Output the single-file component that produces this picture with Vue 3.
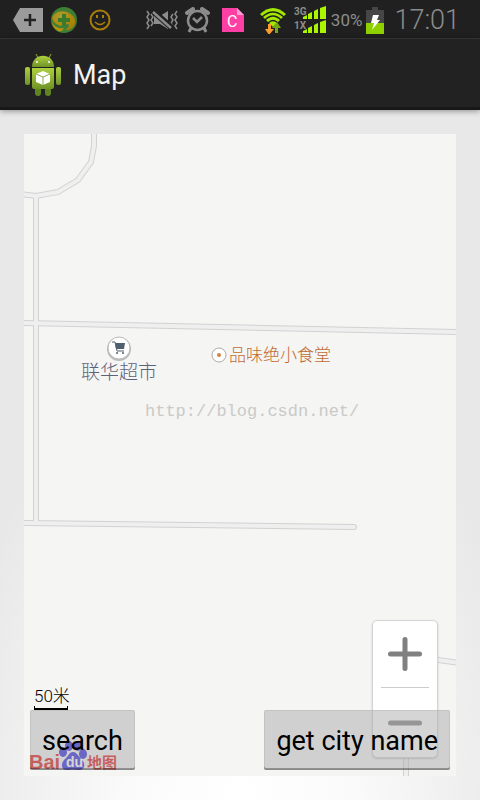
<template>
  <div class="screen">
    <header class="status-bar">
      <div class="notifications">
        <svg width="30" height="24" viewBox="0 0 30 24">
          <path d="M7 0H30V24H7L0 12Z" fill="#9b9b9b" />
          <path d="M17 6V18M11 12H23" stroke="#222" stroke-width="2.500" />
        </svg>
        <svg width="26" height="26" viewBox="0 0 26 26">
          <defs>
            <radialGradient id="shield" cx=".4" cy=".3" r=".8">
              <stop offset="0" stop-color="#a8a03a" />
              <stop offset=".5" stop-color="#b08a0c" />
              <stop offset="1" stop-color="#a07a08" />
            </radialGradient>
          </defs>
          <circle cx="13" cy="13" r="13" fill="#3f7f35" />
          <path d="M1 11C4 3 14 3 18 6C23 9 26 13 23 19C20 23 17 23 14 23C20 20 18 16 16 17C11 21 3 18 1 11Z" fill="url(#shield)" />
          <path d="M1 15C3 20 8 22 13 21C12 24 9 25 7 24C4 22 1 19 1 15Z" fill="#b98f10" />
          <path d="M13 7V19M7 13H19" stroke="#3a7a2a" stroke-width="4" />
        </svg>
        <svg class="smiley" width="22" height="22" viewBox="0 0 22 22" fill="none" stroke="#a97d0c" stroke-width="2">
          <circle cx="11" cy="11" r="9.500" />
          <path d="M6 13Q11 18 16 13" stroke-width="1.500" />
          <path d="M8 6V9M14 6V9" />
        </svg>
      </div>
      <div class="system">
        <svg width="36" height="24" viewBox="0 0 36 24" fill="none" stroke="#8c8c8c" stroke-width="2">
          <path d="M2 3L4 6L2 9L4 12L2 15L4 18L2 21M6 6L8 9L6 12L8 15L6 18M32 3L30 6L32 9L30 12L32 15L30 18L32 21M28 6L26 9L28 12L26 15L28 18" stroke-width="1.500" />
          <path d="M9 8H15L23 3V21L15 16H9Z" fill="#8c8c8c" stroke="none" />
          <path d="M9 4L27 20" stroke="#202020" stroke-width="6" />
          <path d="M8 4L26 20" stroke-width="2.500" />
        </svg>
        <svg width="32" height="26" viewBox="0 0 32 26" fill="none" stroke="#8c8c8c" stroke-width="3">
          <circle cx="12.500" cy="13.500" r="9.500" stroke-width="2.500" />
          <path d="M8 11L12 15L17 10" stroke-width="2.500" />
          <path d="M2 6L8 2M17 2L23 6" stroke-width="4" stroke-linecap="round" />
          <path d="M6 21L4 25M19 21L21 25" />
        </svg>
        <svg width="32" height="26" viewBox="0 0 32 26">
          <path d="M1 1H16L23 8V25H1Z" fill="#ff3fa4" />
          <path d="M16 1L23 8H16Z" fill="#ffa0d2" />
          <text x="6" y="20" class="card-letter">C</text>
        </svg>
        <svg width="32" height="28" viewBox="0 0 32 28" fill="none">
          <path d="M3 8Q16 -4 29 8L16 21Z" fill="#a4e800" />
          <path d="M5 11Q16 1 27 11M8 14Q16 6 24 14M11 17Q16 12 21 17" stroke="#202020" stroke-width="1.500" />
          <path d="M11 18H14V23H17L12 29L8 23H11Z" fill="#ff9a2e" />
          <path d="M18 27V22H15L20 16L24 22H21V27Z" fill="#76a814" />
        </svg>
        <svg width="34" height="28" viewBox="0 0 34 28">
          <path d="M10 13V11L14 9V13ZM15 13V8L19 6V13ZM21 13V5L25 3V13ZM27 13V2L33 0V13Z" fill="#acf500" />
          <path d="M10 27V25L14 23V27ZM15 27V22L19 20V27ZM21 27V19L25 17V27ZM27 27V16L33 14V27Z" fill="#acf500" />
          <text x="1" y="9" class="network">3G</text>
          <text x="1" y="23" class="network">1X</text>
        </svg>
        <span class="percent">30%</span>
        <svg width="18" height="28" viewBox="0 0 18 28">
          <path d="M6 1H12V4H18V28H0V4H6Z" fill="#464646" />
          <path d="M0 17H18V28H0Z" fill="#8fd000" />
          <path d="M7 9H13L11 14H14L6 24L8 17H5Z" fill="#fff" />
        </svg>
        <time class="clock">17:01</time>
      </div>
    </header>

    <div class="action-bar">
      <svg width="36" height="44" viewBox="0 0 36 44">
        <defs>
          <linearGradient id="robot" x1="0" y1="0" x2="0" y2="1">
            <stop offset="0" stop-color="#aed03f" />
            <stop offset="1" stop-color="#6f9426" />
          </linearGradient>
        </defs>
        <path d="M11 1L13 5M26 1L24 5" stroke="#8db52c" stroke-width="1" />
        <path d="M7 14C7 -1 29 -1 29 14Z" fill="url(#robot)" />
        <rect x="0" y="14" width="5" height="18" rx="2" fill="url(#robot)" />
        <rect x="31" y="14" width="5" height="18" rx="2" fill="url(#robot)" />
        <rect x="10" y="32" width="6" height="11" rx="3" fill="#5f8420" />
        <rect x="20" y="32" width="6" height="11" rx="3" fill="#5f8420" />
        <path d="M7 15H29V34Q29 36 26 36H10Q7 36 7 34Z" fill="url(#robot)" />
        <circle cx="12" cy="9" r="1" fill="#fff" />
        <circle cx="24" cy="9" r="1" fill="#fff" />
        <path d="M18 18L25 21V29L18 32L11 29V21Z" fill="#fff" />
        <path d="M11 21L18 24L25 21M18 24V32" stroke="#8bac4c" stroke-width="1" fill="none" />
      </svg>
      <h1>Map</h1>
    </div>

    <main class="content">
      <div class="map">
        <svg class="roads" viewBox="0 0 432 642" preserveAspectRatio="xMinYMin slice">
          <path v-for="road in roads" :key="road" :d="road" class="road-edge" />
          <path v-for="road in roads" :key="road" :d="road" class="road-fill" />
        </svg>

        <div class="poi market">
          <svg width="26" height="26" viewBox="0 0 26 26">
            <circle cx="13" cy="14" r="12" fill="#bbb" />
            <circle cx="13" cy="13" r="11" fill="#fff" stroke="#bbb" />
            <path d="M6 7H9L11 16H18" fill="none" stroke="#50606e" stroke-width="1" />
            <path d="M9 8H19L18 14H10Z" fill="#50606e" />
            <circle cx="11" cy="18" r="1" fill="#50606e" />
            <circle cx="17" cy="18" r="1" fill="#50606e" />
          </svg>
          <span>联华超市</span>
        </div>

        <div class="poi food">
          <svg width="16" height="16" viewBox="0 0 16 16">
            <circle cx="8" cy="8" r="7" fill="#fff" stroke="#aaa" />
            <circle cx="8" cy="8" r="2" fill="#d08447" />
          </svg>
          <span>品味绝小食堂</span>
        </div>

        <div class="watermark">http://blog.csdn.net/</div>

        <div class="scale">
          <span>50米</span>
          <div class="scale-line"></div>
        </div>

        <svg class="logo" width="92" height="36" viewBox="0 0 92 36">
          <text x="0" y="29" class="logo-bai">Bai</text>
          <g fill="#2a22dd">
            <ellipse cx="34" cy="12" rx="4" ry="5" />
            <ellipse cx="40" cy="6" rx="4" ry="5" />
            <ellipse cx="49" cy="6" rx="4" ry="5" />
            <ellipse cx="54" cy="14" rx="4" ry="5" />
            <path d="M44 12C48 12 50 17 53 20C58 25 54 31 49 30Q44 29 39 30C33 31 31 25 35 20C39 17 40 12 44 12Z" />
          </g>
          <text x="37" y="27" class="logo-du">du</text>
          <text x="58" y="28" class="logo-cn">地图</text>
        </svg>

        <div class="zoom">
          <button type="button" aria-label="Zoom in" @click="zoomIn">
            <svg width="34" height="34" viewBox="0 0 34 34">
              <path d="M17 2.500V31.500M2.500 17H31.500" class="sign" />
            </svg>
          </button>
          <button type="button" aria-label="Zoom out" @click="zoomOut">
            <svg width="34" height="34" viewBox="0 0 34 34">
              <path d="M2.500 17H31.500" class="sign" />
            </svg>
          </button>
        </div>

        <div class="actions">
          <button type="button">search</button>
          <button type="button">get city name</button>
        </div>
      </div>
    </main>
  </div>
</template>

<script setup>
import { ref } from 'vue'

const level = ref(18)

const roads = [
  'M70 -4L70 12L67 28L54 46L34 58L12 62L-4 60',
  'M12 62L12 389',
  'M-4 189L436 198',
  'M-4 389L330 393',
  'M382 642V560L400 524L436 529'
]

function zoomIn() {
  level.value = Math.min(level.value + 1, 19)
}

function zoomOut() {
  level.value = Math.max(level.value - 1, 3)
}
</script>

<style>
body { margin: 0; }
</style>

<style scoped>
.screen {
  display: flex;
  flex-direction: column;
  min-height: 100vh;
  font-family: Roboto, "Noto Sans CJK SC", sans-serif;
  background: radial-gradient(ellipse 60% 60% at 50% 100%, #fff 0%, #fafafa 40%, #e8e8e8 100%);
}
svg { display: block; flex-shrink: 0; }

.status-bar {
  display: flex;
  justify-content: space-between;
  align-items: center;
  height: 38px;
  box-sizing: border-box;
  padding: 2px 20px 0 13px;
  background: #202020;
}
.notifications { display: flex; align-items: center; gap: 8px; }
.smiley { margin-left: 4px; }
.system { display: flex; align-items: center; gap: 4px; }
.card-letter { font: 16px Roboto, sans-serif; fill: #fff; }
.network { font: bold 10px Roboto, sans-serif; fill: #8c8c8c; }
.percent { color: #8c8c8c; font-size: 17px; }
.clock { margin-left: 6px; color: #8c8c8c; font-size: 27px; line-height: 36px; font-weight: 300; }

.action-bar {
  display: flex;
  align-items: center;
  gap: 12px;
  height: 72px;
  box-sizing: border-box;
  padding: 4px 25px 0;
  background: #222;
  border-top: 1px solid #333;
  border-bottom: 3px solid #181818;
  box-shadow: 0 1px 6px rgba(0, 0, 0, 0.4);
}
h1 { margin: 0; color: #f3f3f3; font-size: 27px; font-weight: 400; }

.content { display: flex; flex: 1; padding: 24px; }
.map { position: relative; flex: 1; min-height: 480px; overflow: hidden; background: #f5f5f4; }
.roads { position: absolute; inset: 0; width: 100%; height: 100%; }
.road-edge { fill: none; stroke: #d2d2d2; stroke-width: 6; stroke-linecap: round; }
.road-fill { fill: none; stroke: #efefef; stroke-width: 4; stroke-linecap: round; }

.poi { position: absolute; display: flex; align-items: center; font-weight: 300; }
.market { left: 57px; top: 201px; flex-direction: column; color: #5c6279; font-size: 19px; line-height: 24px; }
.food { left: 187px; top: 211px; gap: 2px; color: #c06a30; font-size: 17px; line-height: 20px; }
.watermark {
  position: absolute;
  left: 121px;
  top: 266px;
  color: #cacac6;
  font-family: "Liberation Mono", monospace;
  font-size: 17px;
  line-height: 24px;
}

.scale { position: absolute; left: 10px; bottom: 66px; color: #000; font-size: 17px; line-height: 20px; }
.scale span { font-weight: 300; }
.scale-line { width: 34px; height: 4px; box-sizing: border-box; border: 1px solid #000; border-top: 0; border-bottom-width: 2px; }

.logo { position: absolute; left: 5px; bottom: 0; }
.logo-bai { font: bold 20px "Liberation Sans", sans-serif; fill: #e01010; }
.logo-du { font: bold 14px "Liberation Sans", sans-serif; fill: #fff; }
.logo-cn { font: bold 15px "Noto Sans CJK SC", sans-serif; fill: #e01010; }

.zoom {
  position: absolute;
  right: 18px;
  bottom: 18px;
  display: flex;
  flex-direction: column;
  width: 66px;
  box-sizing: border-box;
  padding: 0 8px;
  background: #fff;
  border: 1px solid #d4d4d4;
  border-radius: 5px;
  box-shadow: 0 1px 2px rgba(0, 0, 0, 0.2);
}
.zoom button { display: flex; justify-content: center; align-items: center; height: 66px; padding: 0; background: none; border: 0; }
.zoom button + button { height: 70px; border-top: 1px solid #ccc; }
.sign { stroke: #808080; stroke-width: 5; stroke-linecap: round; }

.actions { position: absolute; left: 6px; right: 6px; bottom: 6px; display: flex; justify-content: space-between; }
.actions button {
  height: 60px;
  padding: 2px 12px 0;
  color: #000;
  font-family: inherit;
  font-size: 27px;
  background: rgba(171, 171, 171, 0.5);
  border: 0;
  border-radius: 2px;
  box-shadow: inset 0 -2px 0 rgba(0, 0, 0, 0.3), inset 0 0 0 1px rgba(0, 0, 0, 0.06);
}
</style>
